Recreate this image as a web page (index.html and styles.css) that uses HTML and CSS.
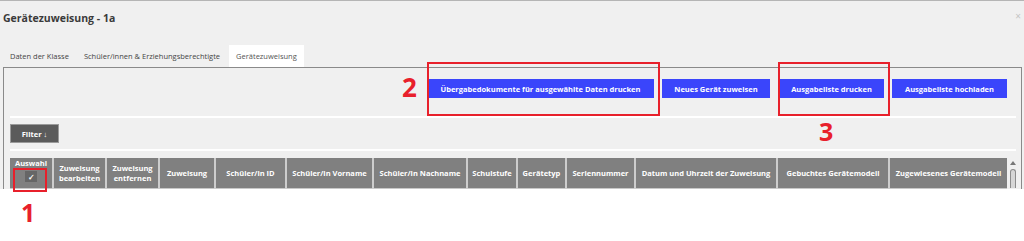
FILE: index.html
```html
<!DOCTYPE html>
<html lang="de">
<head>
<meta charset="utf-8">
<title>Gerätezuweisung - 1a</title>
<link rel="stylesheet" href="styles.css">
</head>
<body>
<div class="page">
  <div class="modal">
    <div class="modal-header">
      <h1 class="title">Gerätezuweisung - 1a</h1>
      <span class="close">×</span>
    </div>
    <div class="tabs">
      <span class="tab">Daten der Klasse</span>
      <span class="tab">Schüler/innen &amp; Erziehungsberechtigte</span>
      <span class="tab active">Gerätezuweisung</span>
    </div>
    <div class="panel">
      <div class="actions">
        <button class="btn">Übergabedokumente für ausgewählte Daten drucken</button>
        <button class="btn">Neues Gerät zuweisen</button>
        <button class="btn">Ausgabeliste drucken</button>
        <button class="btn">Ausgabeliste hochladen</button>
      </div>
      <div class="divider"></div>
      <div class="filter-row">
        <button class="filter">Filter ↓</button>
      </div>
      <div class="divider"></div>
      <div class="table-wrap">
        <table class="grid">
          <colgroup>
            <col style="width:43px"><col style="width:53px"><col style="width:53px"><col style="width:56px"><col style="width:71px"><col style="width:87px"><col style="width:94px"><col style="width:50px"><col style="width:49px"><col style="width:69px"><col style="width:142px"><col style="width:112px"><col style="width:118px">
          </colgroup>
          <thead>
            <tr>
              <th class="select-col"><span class="select-label">Auswahl</span><span class="check">✓</span></th>
              <th>Zuweisung bearbeiten</th>
              <th>Zuweisung entfernen</th>
              <th>Zuweisung</th>
              <th>Schüler/in ID</th>
              <th>Schüler/in Vorname</th>
              <th>Schüler/in Nachname</th>
              <th>Schulstufe</th>
              <th>Gerätetyp</th>
              <th>Seriennummer</th>
              <th>Datum und Uhrzeit der Zuweisung</th>
              <th>Gebuchtes Gerätemodell</th>
              <th>Zugewiesenes Gerätemodell</th>
            </tr>
          </thead>
        </table>
        <div class="scrollbar">
          <span class="arrow"></span>
          <span class="thumb"></span>
        </div>
      </div>
    </div>
  </div>

  <div class="mark box-1"></div>
  <div class="mark box-2"></div>
  <div class="mark box-3"></div>
  <span class="num num-1">1</span>
  <span class="num num-2">2</span>
  <span class="num num-3">3</span>
</div>
</body>
</html>
```

FILE: styles.css
```css
* { box-sizing: border-box; }
html, body { margin: 0; padding: 0; background: #ffffff; }
body { font-family: "Open Sans", "Liberation Sans", sans-serif; color: #333; }

.page { position: relative; width: 1024px; height: 241px; overflow: hidden; }

.modal {
  height: 189px;
  background: #f0f0f0;
  border-top: 1px solid #b5b5b5;
  overflow: hidden;
}

.modal-header {
  height: 44px;
  display: flex;
  justify-content: space-between;
  align-items: flex-start;
  padding: 10px 0 0 3px;
}
.title {
  margin: 0;
  font-size: 10.5px;
  font-weight: 700;
  line-height: 14px;
  color: #3a3a3a;
}
.close {
  font-size: 10px;
  line-height: 10px;
  color: #c4c4c4;
  margin: 0px 3px 0 0;
  padding-top: 0;
}

.tabs {
  display: flex;
  height: 22px;
  padding-left: 3px;
  gap: 1px;
}
.tab {
  display: flex;
  align-items: center;
  padding: 0 7px;
  font-size: 7.5px;
  color: #444;
}
.tab.active { background: #ffffff; color: #555; margin-left: 1px; }

.panel {
  margin: 0 2px 0 3px;
  border: 1px solid #8a8a8a;
  border-bottom: none;
  height: 123px;
  padding: 11px 0 0 6px;
}

.actions {
  display: flex;
  justify-content: flex-end;
  gap: 8px;
  padding-right: 14px;
}
.btn {
  height: 19px;
  border: none;
  margin: 0;
  background: #3a45fb;
  color: #fff;
  font-family: inherit;
  font-size: 7.5px;
  font-weight: 700;
  padding: 0 11px;
}
.actions .btn:nth-child(1) { width: 227px; }
.actions .btn:nth-child(2) { width: 108px; }
.actions .btn:nth-child(3) { width: 105px; margin-left: 1px; }
.actions .btn:nth-child(4) { width: 115px; }

.divider {
  height: 2px;
  background: #ffffff;
  margin-right: 5px;
}
.actions + .divider { margin-top: 18px; }

.filter-row { padding: 6px 0; }
.filter {
  display: block;
  width: 49px;
  height: 19px;
  background: #5b5b5b;
  border: 1px solid #9a9a9a;
  color: #fff;
  font-family: inherit;
  font-size: 7.5px;
  font-weight: 700;
  padding: 0;
}

.table-wrap {
  display: flex;
  gap: 2px;
  margin-top: 7px;
}
.grid {
  table-layout: fixed;
  width: 997px;
  border-collapse: collapse;
}
.grid th {
  height: 30px;
  background: #808080;
  color: #fff;
  font-size: 7.5px;
  font-weight: 700;
  line-height: 10px;
  text-align: center;
  vertical-align: middle;
  padding: 0 2px;
  border-left: 2px solid #cdcdcd;
  border-bottom: 1px solid #c8c8c8;
}
.grid th:first-child { border-left: none; }
.select-col { position: relative; }
.select-label {
  display: block;
  margin-top: -6px;
}
.check {
  display: block;
  width: 12px;
  height: 11px;
  margin: 3px auto 0;
  background: #666;
  color: #fff;
  font-size: 8px;
  line-height: 11px;
}

.scrollbar {
  width: 7px;
  height: 30px;
  display: flex;
  flex-direction: column;
  align-items: center;
  padding-top: 3px;
  gap: 4px;
}
.arrow {
  width: 0; height: 0;
  border-left: 3px solid transparent;
  border-right: 3px solid transparent;
  border-bottom: 4px solid #777;
}
.thumb {
  width: 6px;
  flex: 1;
  background: #d6d6d6;
  border: 1px solid #8c8c8c;
  border-bottom: none;
  border-radius: 3px 3px 0 0;
}

/* annotation overlays */
.mark {
  position: absolute;
  border: 2px solid #e8202b;
}
.box-1 { left: 13px; top: 168px; width: 34px; height: 24px; }
.box-2 { left: 427px; top: 62px; width: 233px; height: 54px; }
.box-3 { left: 778px; top: 62px; width: 112px; height: 54px; }

.num {
  position: absolute;
  color: #e8202b;
  font-weight: 700;
  font-size: 25px;
  line-height: 25px;
}
.num-1 { left: 21px; top: 200px; }
.num-2 { left: 402px; top: 75px; font-size: 26px; }
.num-3 { left: 819px; top: 119px; }
```
